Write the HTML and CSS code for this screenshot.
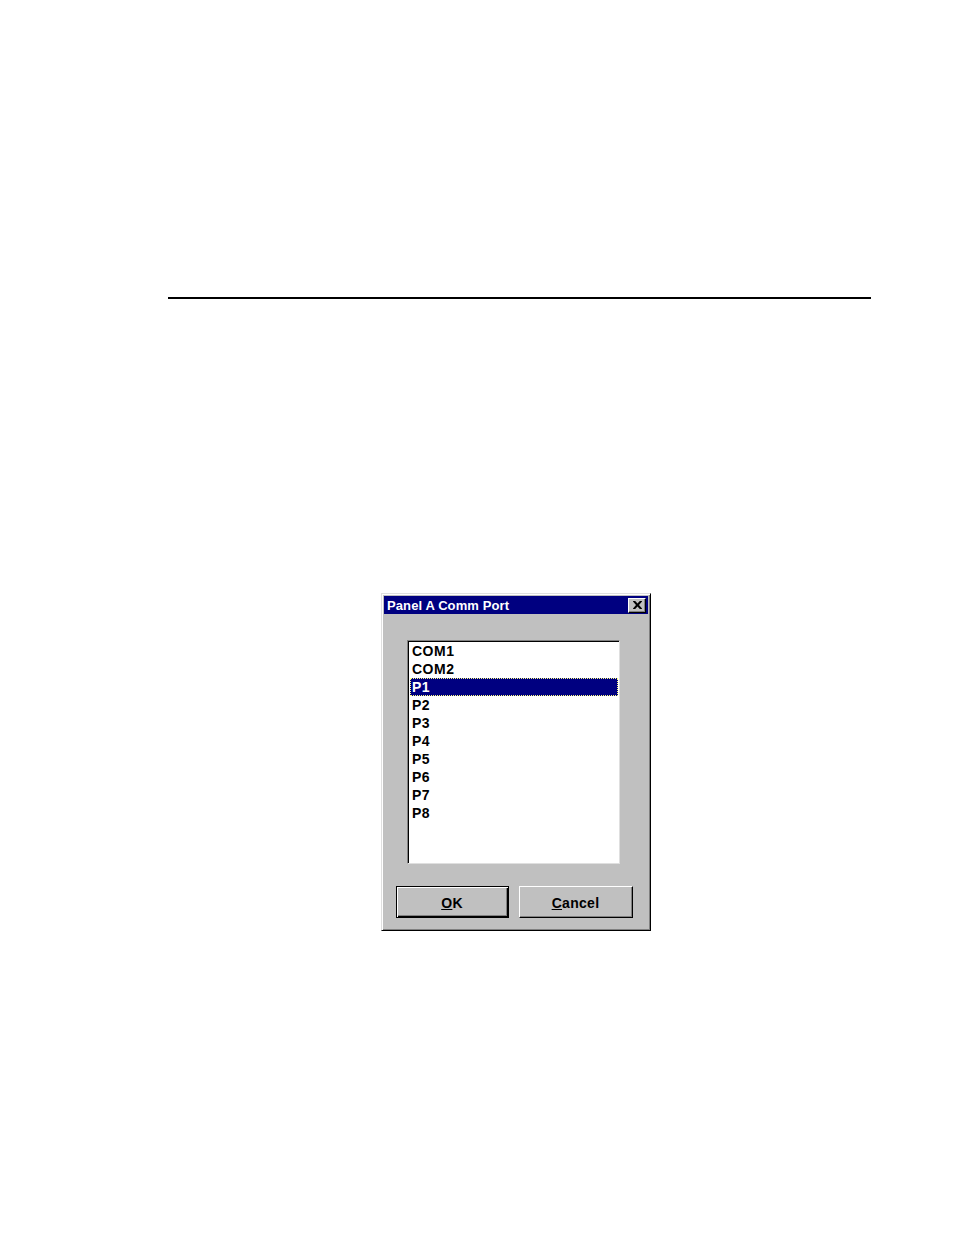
FILE: index.html
```html
<!DOCTYPE html>
<html>
<head>
<meta charset="utf-8">
<link rel="stylesheet" href="styles.css">
</head>
<body>
<div class="page">
  <div class="rule"></div>
  <div class="dialog">
    <div class="titlebar">
      <span class="title">Panel A Comm Port</span>
      <span class="close">
        <svg width="9" height="8" viewBox="0 0 9 8"><path d="M0 0h2.2l2.3 2.5L6.8 0H9v0.6L6 4l3 3.4V8H6.8L4.5 5.5 2.2 8H0v-0.6L3 4 0 0.6z" fill="#000"/></svg>
      </span>
    </div>
    <div class="content">
      <div class="listbox">
        <div class="item">COM1</div>
        <div class="item">COM2</div>
        <div class="item selected">P1</div>
        <div class="item">P2</div>
        <div class="item">P3</div>
        <div class="item">P4</div>
        <div class="item">P5</div>
        <div class="item">P6</div>
        <div class="item">P7</div>
        <div class="item">P8</div>
      </div>
      <div class="buttons">
        <div class="btn default"><span class="inner"><u>O</u>K</span></div>
        <div class="btn"><span class="inner"><u>C</u>ancel</span></div>
      </div>
    </div>
  </div>
</div>
</body>
</html>
```

FILE: styles.css
```css
html, body {
  margin: 0;
  padding: 0;
  background: #fff;
}
.page {
  width: 954px;
  height: 1235px;
  padding-top: 297px;
  box-sizing: border-box;
  font-family: "Liberation Sans", Arial, sans-serif;
}
.rule {
  margin-left: 168px;
  width: 703px;
  height: 2px;
  background: #000;
}
.dialog {
  margin-left: 381px;
  margin-top: 294px;
  width: 270px;
  height: 338px;
  box-sizing: border-box;
  background: #c0c0c0;
  border-top: 1px solid #dfdfdf;
  border-left: 1px solid #dfdfdf;
  border-right: 1px solid #000;
  border-bottom: 1px solid #000;
  box-shadow: inset 1px 1px 0 #fff, inset -1px -1px 0 #808080;
  padding: 2px;
  display: flex;
  flex-direction: column;
}
.titlebar {
  height: 18px;
  background: #000080;
  display: flex;
  align-items: center;
  justify-content: space-between;
  padding: 0 2px 0 3px;
}
.title {
  color: #fff;
  font-weight: bold;
  font-size: 13px;
  letter-spacing: 0.1px;
}
.close {
  width: 18px;
  height: 15px;
  box-sizing: border-box;
  background: #c0c0c0;
  border-top: 1px solid #fff;
  border-left: 1px solid #fff;
  border-right: 1px solid #000;
  border-bottom: 1px solid #000;
  box-shadow: inset -1px -1px 0 #808080;
  display: flex;
  align-items: center;
  justify-content: center;
}
.content {
  padding: 26px 0 0 23px;
}
.listbox {
  width: 213px;
  height: 224px;
  box-sizing: border-box;
  background: #fff;
  border-top: 1px solid #808080;
  border-left: 1px solid #808080;
  border-right: 1px solid #dfdfdf;
  border-bottom: 1px solid #dfdfdf;
  box-shadow: inset 1px 1px 0 #000;
  padding: 1px 1px 0 2px;
}
.item {
  height: 18px;
  line-height: 18px;
  font-size: 14px;
  color: #000;
  padding-left: 2px;
  font-weight: bold;
  letter-spacing: 0.5px;
}
.item.selected {
  background: #000080;
  color: #fff;
  outline: 1px dotted #ffff80;
  outline-offset: -1px;
}
.buttons {
  display: flex;
  gap: 10px;
  margin-top: 22px;
  margin-left: -11px;
}
.btn {
  width: 114px;
  height: 32px;
  box-sizing: border-box;
  background: #c0c0c0;
  border-top: 1px solid #fff;
  border-left: 1px solid #fff;
  border-right: 1px solid #000;
  border-bottom: 1px solid #000;
  box-shadow: inset -1px -1px 0 #808080;
  display: flex;
  align-items: center;
  justify-content: center;
  font-size: 14px;
  font-weight: bold;
  color: #000;
}
.btn.default {
  width: 113px;
  border: 1px solid #000;
  box-shadow: inset 1px 1px 0 #fff, inset -1px -1px 0 #000, inset -2px -2px 0 #808080;
}
.btn .inner {
  padding-top: 1px;
  padding-right: 1px;
  letter-spacing: 0.3px;
}
```
